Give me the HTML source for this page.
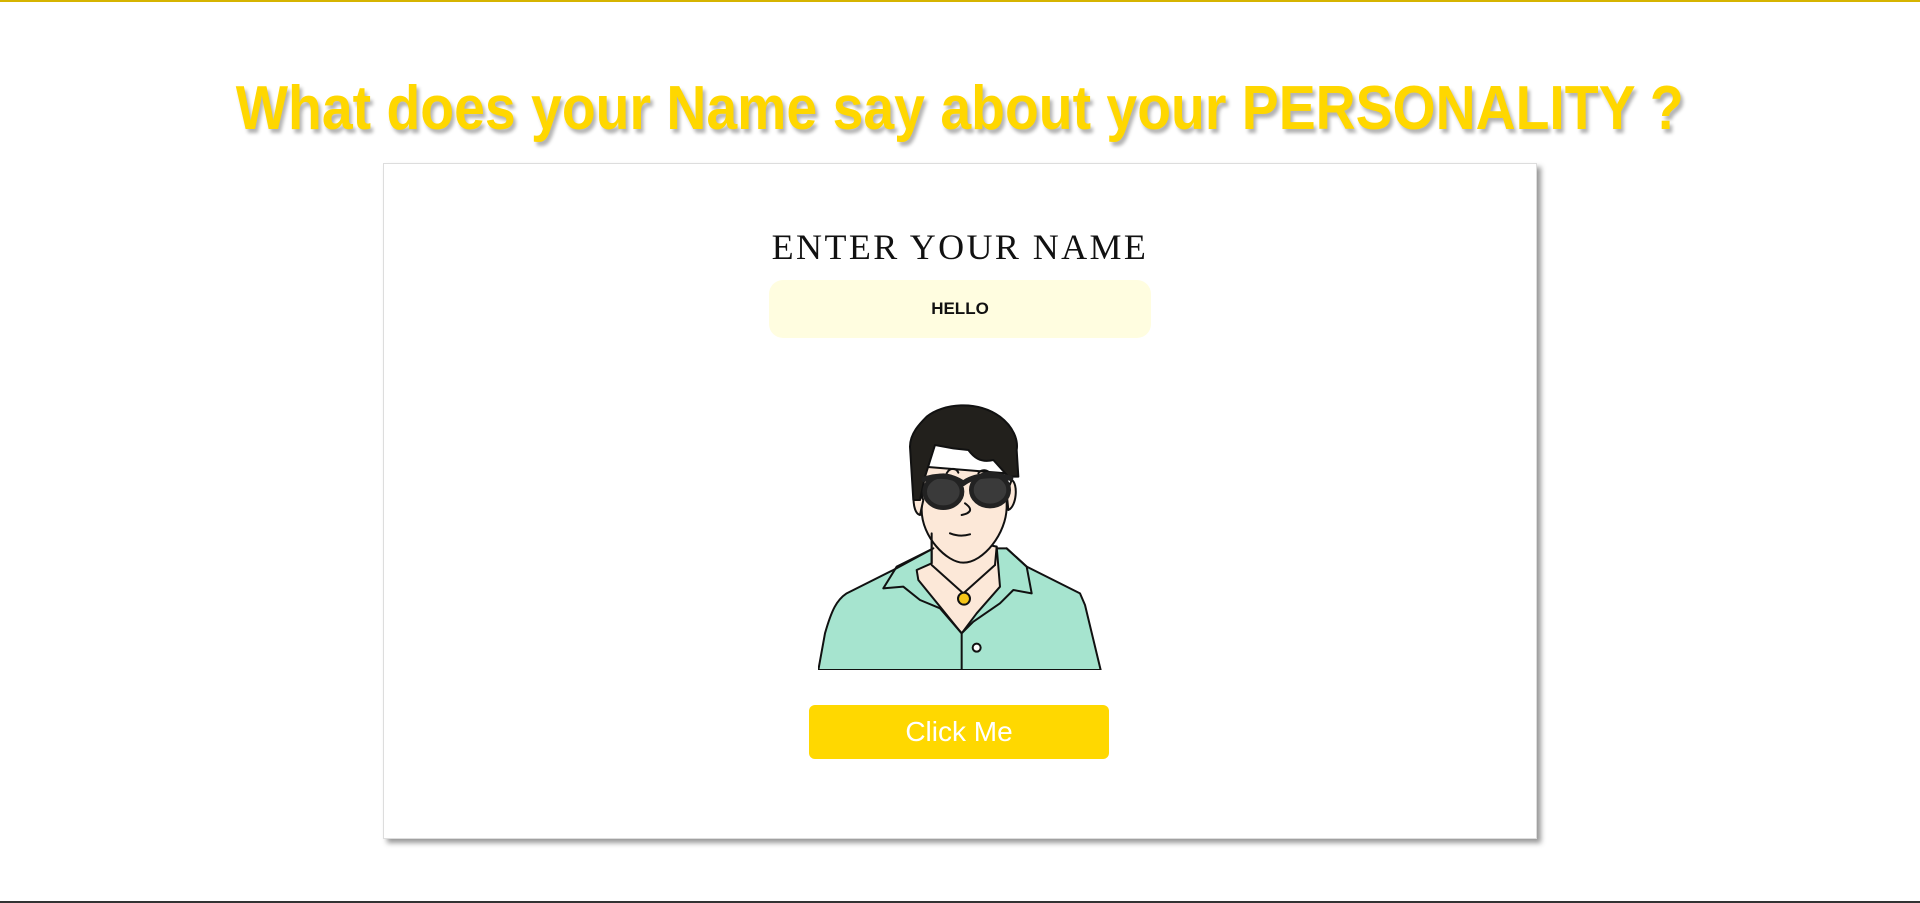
<!DOCTYPE html>
<html><head><meta charset="utf-8"><style>
html,body{margin:0;padding:0;width:1920px;height:903px;background:#fff;overflow:hidden;position:relative;font-family:"Liberation Sans",sans-serif}
.topline{position:absolute;left:0;top:0;width:1920px;height:2px;background:#d6b400}
.botline{position:absolute;left:0;top:901px;width:1920px;height:2px;background:#333}
.title{position:absolute;left:0;width:1920px;top:73px;text-align:center}
.title span{display:inline-block;font-weight:bold;font-size:62px;line-height:72px;color:#ffd700;text-shadow:3px 4px 4px rgba(0,0,0,0.3);transform:scaleX(0.893);white-space:nowrap}
.card{position:absolute;left:383px;top:163px;width:1152px;height:674px;border:1px solid #ddd;background:#fff;box-shadow:4px 4px 5px #999}
.enter{position:absolute;left:760px;top:226px;width:400px;text-align:center;font-family:"Liberation Serif",serif;font-size:36px;letter-spacing:2.4px;color:#111;white-space:nowrap}
.inp{position:absolute;left:769px;top:280px;width:382px;height:58px;background:#fffde0;border-radius:14px;text-align:center;line-height:58px;font-weight:bold;font-size:17px;color:#111}
.btn{position:absolute;left:809px;top:705px;width:300px;height:54px;background:#ffd800;border-radius:6px;color:#fff;text-align:center;line-height:54px;font-size:28px}
svg{position:absolute;left:818px;top:400px}
</style></head><body>
<div class="topline"></div>
<div class="title"><span>What does your Name say about your PERSONALITY ?</span></div>
<div class="card"></div>
<div class="enter">ENTER YOUR NAME</div>
<div class="inp">HELLO</div>
<svg width="284" height="270" viewBox="175 600 850 810" fill="none" stroke="#111" stroke-width="6" stroke-linejoin="round" stroke-linecap="round">
<path d="M175 1410 L195 1300 C215 1230 230 1200 260 1180 L400 1110 L520 1045 L740 1045 L800 1100 L960 1180 L975 1215 L1022 1410 Z" fill="#a6e4cf"/>
<path d="M515 1000 L515 1090 L470 1110 L475 1140 L540 1220 L605 1300 L650 1240 L720 1160 L710 1040 Z" fill="#fce8d8"/>
<path d="M370 1165 L430 1160 L480 1200 L540 1225 L605 1300 M520 1045 L410 1100 L370 1165 M740 1045 L800 1100 L815 1180 L760 1170 L720 1210 L640 1265 L605 1300 M605 1300 L605 1410"/>
<path d="M485 930 C485 1010 560 1088 610 1088 C670 1088 740 1000 740 920 L740 820 L490 800 Z" fill="#fce8d8"/>
<path d="M470 860 C455 880 458 940 480 945 L490 900 Z M755 840 C775 850 770 920 745 930 L740 880 Z" fill="#fce8d8"/>
<path d="M515 1000 L515 1090 M710 1040 L705 1095"/>
<path d="M460 900 L450 740 C450 700 480 670 500 650 C550 610 650 600 720 650 C760 680 775 720 770 750 L775 830 L745 830 L700 780 C660 790 640 770 625 750 L580 745 L525 735 L495 830 L480 900 Z" fill="#22201c"/>
<path d="M560 820 C570 800 590 805 595 818 M655 820 C665 805 685 810 690 822"/>
<ellipse cx="550" cy="875" rx="56" ry="48" fill="#3a3a3a" stroke="#222" stroke-width="14"/>
<ellipse cx="690" cy="870" rx="56" ry="48" fill="#3a3a3a" stroke="#222" stroke-width="14"/>
<path d="M492 838 C540 822 580 828 610 850 C640 826 700 820 752 835" stroke="#222" stroke-width="16"/>
<path d="M615 910 Q650 935 605 945 M570 1000 Q600 1012 630 1003"/>
<path d="M515 1095 L610 1180 L705 1095"/>
<circle cx="612" cy="1196" r="18" fill="#f5c518"/>
<circle cx="650" cy="1343" r="12" fill="#fff"/>
</svg>
<div class="btn">Click Me</div>
<div class="botline"></div>
</body></html>
